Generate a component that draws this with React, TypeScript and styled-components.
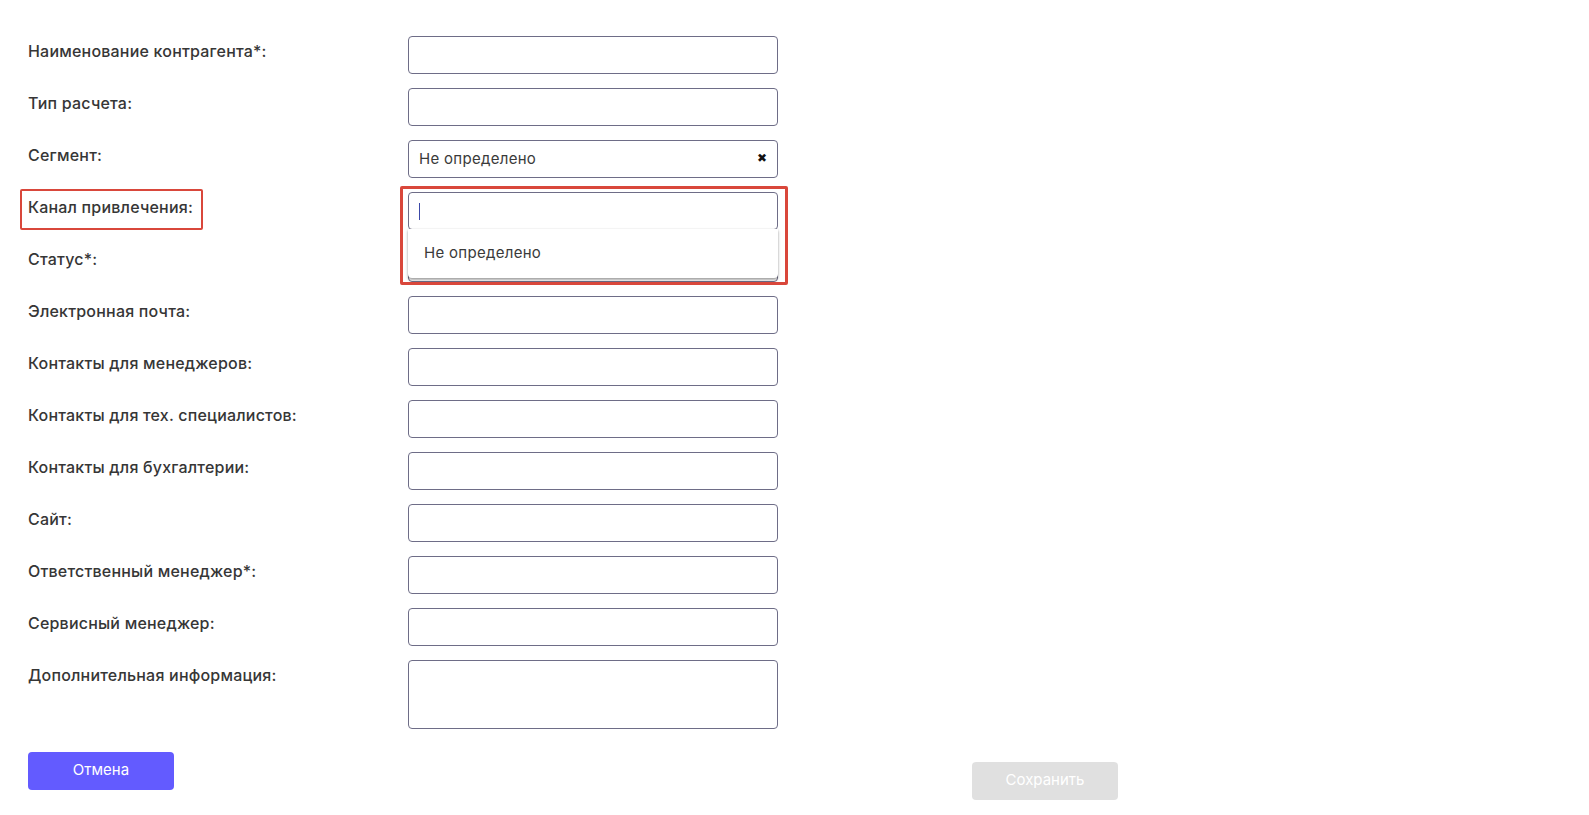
import React from "react";
import styled, { createGlobalStyle, css } from "styled-components";

const Global = createGlobalStyle`
  html, body { margin: 0; padding: 0; background: #ffffff; }
  body { font-family: Inter, "Noto Sans", sans-serif; color: #333333; }
  * { box-sizing: border-box; }
`;

const Page = styled.div`
  width: 1589px;
  min-height: 815px;
  padding: 36px 0 0 28px;
`;

const Form = styled.div`
  display: flex;
  flex-direction: column;
  gap: 14px;
`;

const Row = styled.div`
  display: grid;
  grid-template-columns: 380px 370px;
  align-items: start;
`;

const Label = styled.span<{ $marked?: boolean }>`
  justify-self: start;
  position: relative;
  padding-top: 5px;
  font-size: 16px;
  line-height: 20px;
  font-weight: 500;
  letter-spacing: 0.2px;
  color: #363636;
  ${(p) =>
    p.$marked &&
    css`
      &::after {
        content: "";
        position: absolute;
        left: -8px;
        right: -10px;
        top: -3px;
        bottom: -13px;
        border: 2px solid #d9473b;
        border-radius: 2px;
      }
    `}
`;

const Field = styled.div<{ $tall?: boolean }>`
  position: relative;
  height: ${(p) => (p.$tall ? "69px" : "38px")};
  border: 1px solid #6e6d87;
  border-radius: 4px;
  background: #fff;
  display: flex;
  align-items: center;
  padding: 0 10px;
`;

const Value = styled.span`
  flex: 1;
  font-size: 15px;
  letter-spacing: 0.3px;
  color: #3a3a3a;
  margin-top: -2px;
`;

const Clear = styled.span`
  font-size: 12px;
  color: #111;
  line-height: 1;
  margin-top: -2px;
`;

const Caret = styled.span`
  width: 1px;
  height: 17px;
  background: #3c49a8;
`;

const Highlight = styled.div`
  position: absolute;
  left: -9px;
  right: -11px;
  top: -7px;
  height: 99px;
  border: 3px solid #d9473b;
  border-radius: 2px;
  pointer-events: none;
  z-index: 3;
`;

const Menu = styled.div`
  position: absolute;
  left: -1px;
  right: -1px;
  top: 36px;
  height: 49px;
  background: #fff;
  border-radius: 0 0 4px 4px;
  box-shadow: 0 2px 3px rgba(0, 0, 0, 0.35), 0 0 2px rgba(0, 0, 0, 0.12);
  z-index: 2;
  display: flex;
  align-items: center;
  padding-left: 16px;
  padding-bottom: 2px;
  font-size: 15px;
  letter-spacing: 0.3px;
  color: #3a3a3a;
`;

const Footer = styled.div`
  display: flex;
  align-items: flex-start;
  gap: 798px;
  margin-top: 23px;
`;

const Button = styled.button<{ $primary?: boolean }>`
  width: 146px;
  height: 38px;
  border: none;
  border-radius: 4px;
  padding: 0 0 3px;
  font-family: Inter, "Noto Sans", sans-serif;
  font-size: 15px;
  font-weight: 400;
  color: #fff;
  background: ${(p) => (p.$primary ? "#635bff" : "#e0e0e0")};
  margin-top: ${(p) => (p.$primary ? "0" : "10px")};
`;

const labels = [
  "Наименование контрагента*:",
  "Тип расчета:",
  "Сегмент:",
  "Канал привлечения:",
  "Статус*:",
  "Электронная почта:",
  "Контакты для менеджеров:",
  "Контакты для тех. специалистов:",
  "Контакты для бухгалтерии:",
  "Сайт:",
  "Ответственный менеджер*:",
  "Сервисный менеджер:",
  "Дополнительная информация:",
];

export default function App() {
  return (
    <Page>
      <Global />
      <Form>
        {labels.map((l, i) => (
          <Row key={l}>
            <Label $marked={i === 3}>{l}</Label>
            <Field $tall={i === 12}>
              {i === 2 && (
                <>
                  <Value>Не определено</Value>
                  <Clear>✖</Clear>
                </>
              )}
              {i === 3 && (
                <>
                  <Caret />
                  <Highlight />
                  <Menu>Не определено</Menu>
                </>
              )}
            </Field>
          </Row>
        ))}
      </Form>
      <Footer>
        <Button $primary>Отмена</Button>
        <Button>Сохранить</Button>
      </Footer>
    </Page>
  );
}
